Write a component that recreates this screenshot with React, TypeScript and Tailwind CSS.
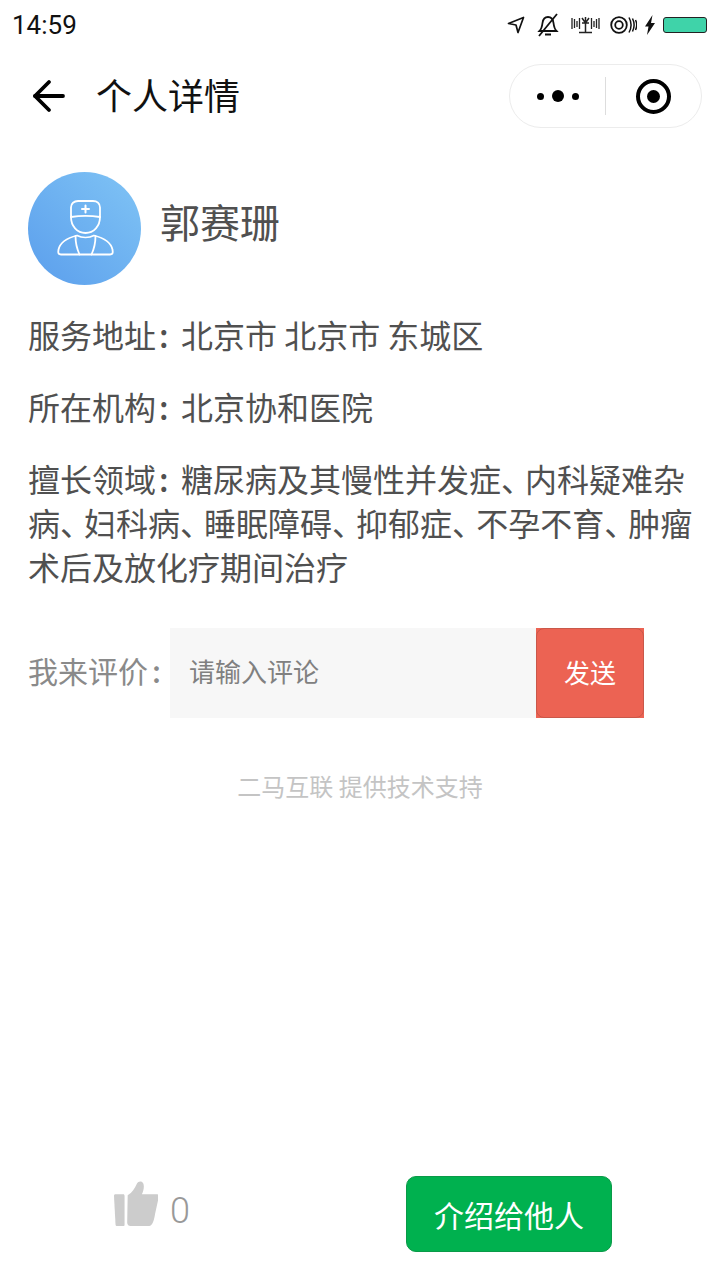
import { ArrowLeft } from 'lucide-react';

const cjk = { fontFamily: '"Noto Sans CJK SC", sans-serif' };

function StatusIcons() {
    return (
        <div className="flex items-center">
            <svg width="18" height="18" viewBox="0 0 18 18" fill="none" stroke="#111" strokeWidth="1.7" strokeLinejoin="round">
                <path d="M1.500 7.500 16.500 1.500 11 16.500 9 9z" />
            </svg>
            <svg width="22" height="24" viewBox="0 0 22 24" fill="none" stroke="#111" strokeWidth="1.8" className="ml-[12px]">
                <path d="M2.500 18c2-2 2.500-4 3-8 .5-4 2.500-6 5.500-6s5 2 5.500 6c.5 4 1 6 3 8z" />
                <path d="M8 21.500h6M20 1 2 23" />
            </svg>
            <svg width="29" height="18" viewBox="0 0 29 18" fill="none" stroke="#222" strokeWidth="1.300" className="ml-[12px]">
                <path d="M1 2v11M3.500 3v9M6 5v6M8.500 2v11M20.500 2v11M23 5v6M25.500 3v9M28 2v11" />
                <path d="M14.500 1v15M8 16.500h13M11 2l3.500 5L18 2M11 7h7" strokeWidth="1.500" />
            </svg>
            <svg width="27" height="18" viewBox="0 0 27 18" fill="none" stroke="#111" className="ml-[10px]">
                <circle cx="9" cy="9" r="7.800" strokeWidth="1.800" />
                <circle cx="9" cy="9" r="3.800" strokeWidth="1.800" />
                <path d="M19 1.500c2.500 4.500 2.500 10.500 0 15M22.500 2.500c2 4 2 9 0 13M25.500 4c1.500 3 1.500 7 0 10" strokeWidth="1.500" />
            </svg>
            <svg width="10" height="20" viewBox="0 0 10 20" fill="#111" className="ml-[8px]">
                <path d="M7.500 0 0 11.500h3.500L2 20 10 8H6z" />
            </svg>
            <div className="ml-[8px] h-[16px] w-[44px] rounded-[3px] border border-[#222] bg-[#3fd3a9]" />
        </div>
    );
}

function DoctorIcon() {
    return (
        <svg width="58" height="57" viewBox="0 0 58 57" fill="none" stroke="#fff" strokeWidth="1.8" strokeLinecap="round" strokeLinejoin="round" className="-mt-[3px] ml-[2px]">
            <path d="M14 18V8.500C14 4.500 17 2 21 2h15c4 0 7 2.500 7 6.500V18c-9-1.500-20-1.500-29 0z" />
            <path d="M14 18c0 9 6 16 14.500 16S43 27 43 18" />
            <path d="M28.500 6.500v7M25 10h7" strokeWidth="2" />
            <path d="M4 55.500c-3 0-3-2-2.500-5C3 44 10 39 20 36.500c5 2.500 12 2.500 17 0C47 39 54 44 55.500 50.500c.5 3 .5 5-2.500 5z" />
            <path d="M18.500 37c0 6 1.500 13 4 18.500M38.500 37c0 6-1.500 13-4 18.500" />
        </svg>
    );
}

// 、 in the reference only takes up 3/4 of an em
function Punct({ text }: { text: string }) {
    const parts = text.split('、');
    return (
        <>
            {parts.map((part, i) => (
                <span key={i}>
                    {part}
                    {i < parts.length - 1 && <span className="mr-[8px] [font-feature-settings:'halt']">、</span>}
                </span>
            ))}
        </>
    );
}

function Label({ text }: { text: string }) {
    return (
        <>
            {text}
            <span className="inline-block w-[25px] pl-[3px] font-medium">:</span>
        </>
    );
}

export default function App() {
    return (
        <div className="flex h-[1280px] w-[720px] flex-col overflow-hidden bg-white text-[#505050]" style={cjk}>
            <div className="flex h-[50px] shrink-0 items-center justify-between pl-[12px] pr-[13px]">
                <span className="text-[26px] leading-none text-[#111]" style={{ fontFamily: 'Roboto, sans-serif' }}>14:59</span>
                <StatusIcons />
            </div>

            <div className="mt-[14px] flex h-[64px] shrink-0 items-center pl-[28px] pr-[18px]">
                <ArrowLeft size={48} strokeWidth={3.8} absoluteStrokeWidth className="-ml-[3px] text-black" />
                <h1 className="mb-[5px] ml-[23px] text-[36px] font-normal text-[#111]">个人详情</h1>
                <div className="ml-auto flex h-[64px] w-[193px] items-center rounded-full border border-[#ececec] bg-white">
                    <div className="flex w-[95px] items-center justify-center gap-[8px]">
                        <span className="h-[7px] w-[7px] rounded-full bg-black" />
                        <span className="h-[12px] w-[12px] rounded-full bg-black" />
                        <span className="h-[7px] w-[7px] rounded-full bg-black" />
                    </div>
                    <div className="h-[38px] w-px bg-[#dddddd]" />
                    <div className="flex flex-1 items-center justify-center">
                        <div className="flex h-[35px] w-[35px] items-center justify-center rounded-full border-[4px] border-black">
                            <span className="h-[13px] w-[13px] rounded-full bg-black" />
                        </div>
                    </div>
                </div>
            </div>

            <div className="mt-[44px] flex items-center px-[28px]">
                <div className="flex h-[113px] w-[113px] items-center justify-center rounded-full bg-gradient-to-tr from-[#5b9eec] to-[#80c4f5]">
                    <DoctorIcon />
                </div>
                <div className="ml-[19px] -mt-[16px] text-[40px] leading-[50px]">郭赛珊</div>
            </div>

            <div className="mt-[27px] pl-[28px] pr-[24px] text-[32px] leading-[44px]">
                <p><Label text="服务地址" />北京市 北京市 东城区</p>
                <p className="mt-[28px]"><Label text="所在机构" />北京协和医院</p>
                <p className="mt-[28px]"><Label text="擅长领域" /><Punct text="糖尿病及其慢性并发症、内科疑难杂病、妇科病、睡眠障碍、抑郁症、不孕不育、肿瘤术后及放化疗期间治疗" /></p>
            </div>

            <div className="mt-[40px] flex h-[90px] items-center pl-[28px]">
                <span className="w-[142px] pb-[6px] text-[30px] leading-[40px] text-[#8a8a8a]">我来评价<span className="pl-[4px] font-medium">:</span></span>
                <div className="flex h-full w-[366px] items-center bg-[#f7f7f7] pb-[6px] pl-[19px] text-[26px] text-[#808080]">请输入评论</div>
                <button type="button" className="h-full w-[108px] bg-[#ec6353] text-[26px] text-white">
                    <span className="flex h-full items-center justify-center rounded-[8px] border border-[#c9584a] pb-[4px]">发送</span>
                </button>
            </div>

            <div className="mt-[50px] text-center text-[24px] leading-[36px] text-[#c4c4c4]">二马互联 提供技术支持</div>

            <div className="mb-[28px] mt-auto flex h-[76px] items-center">
                <div className="ml-[113px] flex w-[77px] items-center">
                    <svg width="46" height="46" viewBox="0 0 46 46" fill="#cccccc" className="mb-[20px]">
                        <path d="M1 14.500c0-.8.6-1.500 1.500-1.500h8c.8 0 1.300.7 1.300 1.500v30c0 .5-.4 1-1 1H4c-.8 0-1.300-.5-1.400-1.300z" />
                        <path d="M15 14c5-3 7-7 9-11 .8-2 2-3 4-3 2.500 0 3.500 2.500 3.500 5 0 3-1 6-2 8h15c1.500 0 2.500 1 2.300 2.500L43 33c-1 7-3 12.500-6 12.500H18c-2 0-3.500-1-3.500-3.500z" />
                    </svg>
                    <span className="mb-[6px] ml-[12px] text-[36px] text-[#999999]" style={{ fontFamily: 'Roboto, sans-serif', fontWeight: 300 }}>0</span>
                </div>
                <button type="button" className="ml-[216px] h-[76px] w-[206px] rounded-[10px] border border-[#0a9a48] bg-[#00b14f] text-[30px] text-white">介绍给他人</button>
            </div>
        </div>
    );
}
